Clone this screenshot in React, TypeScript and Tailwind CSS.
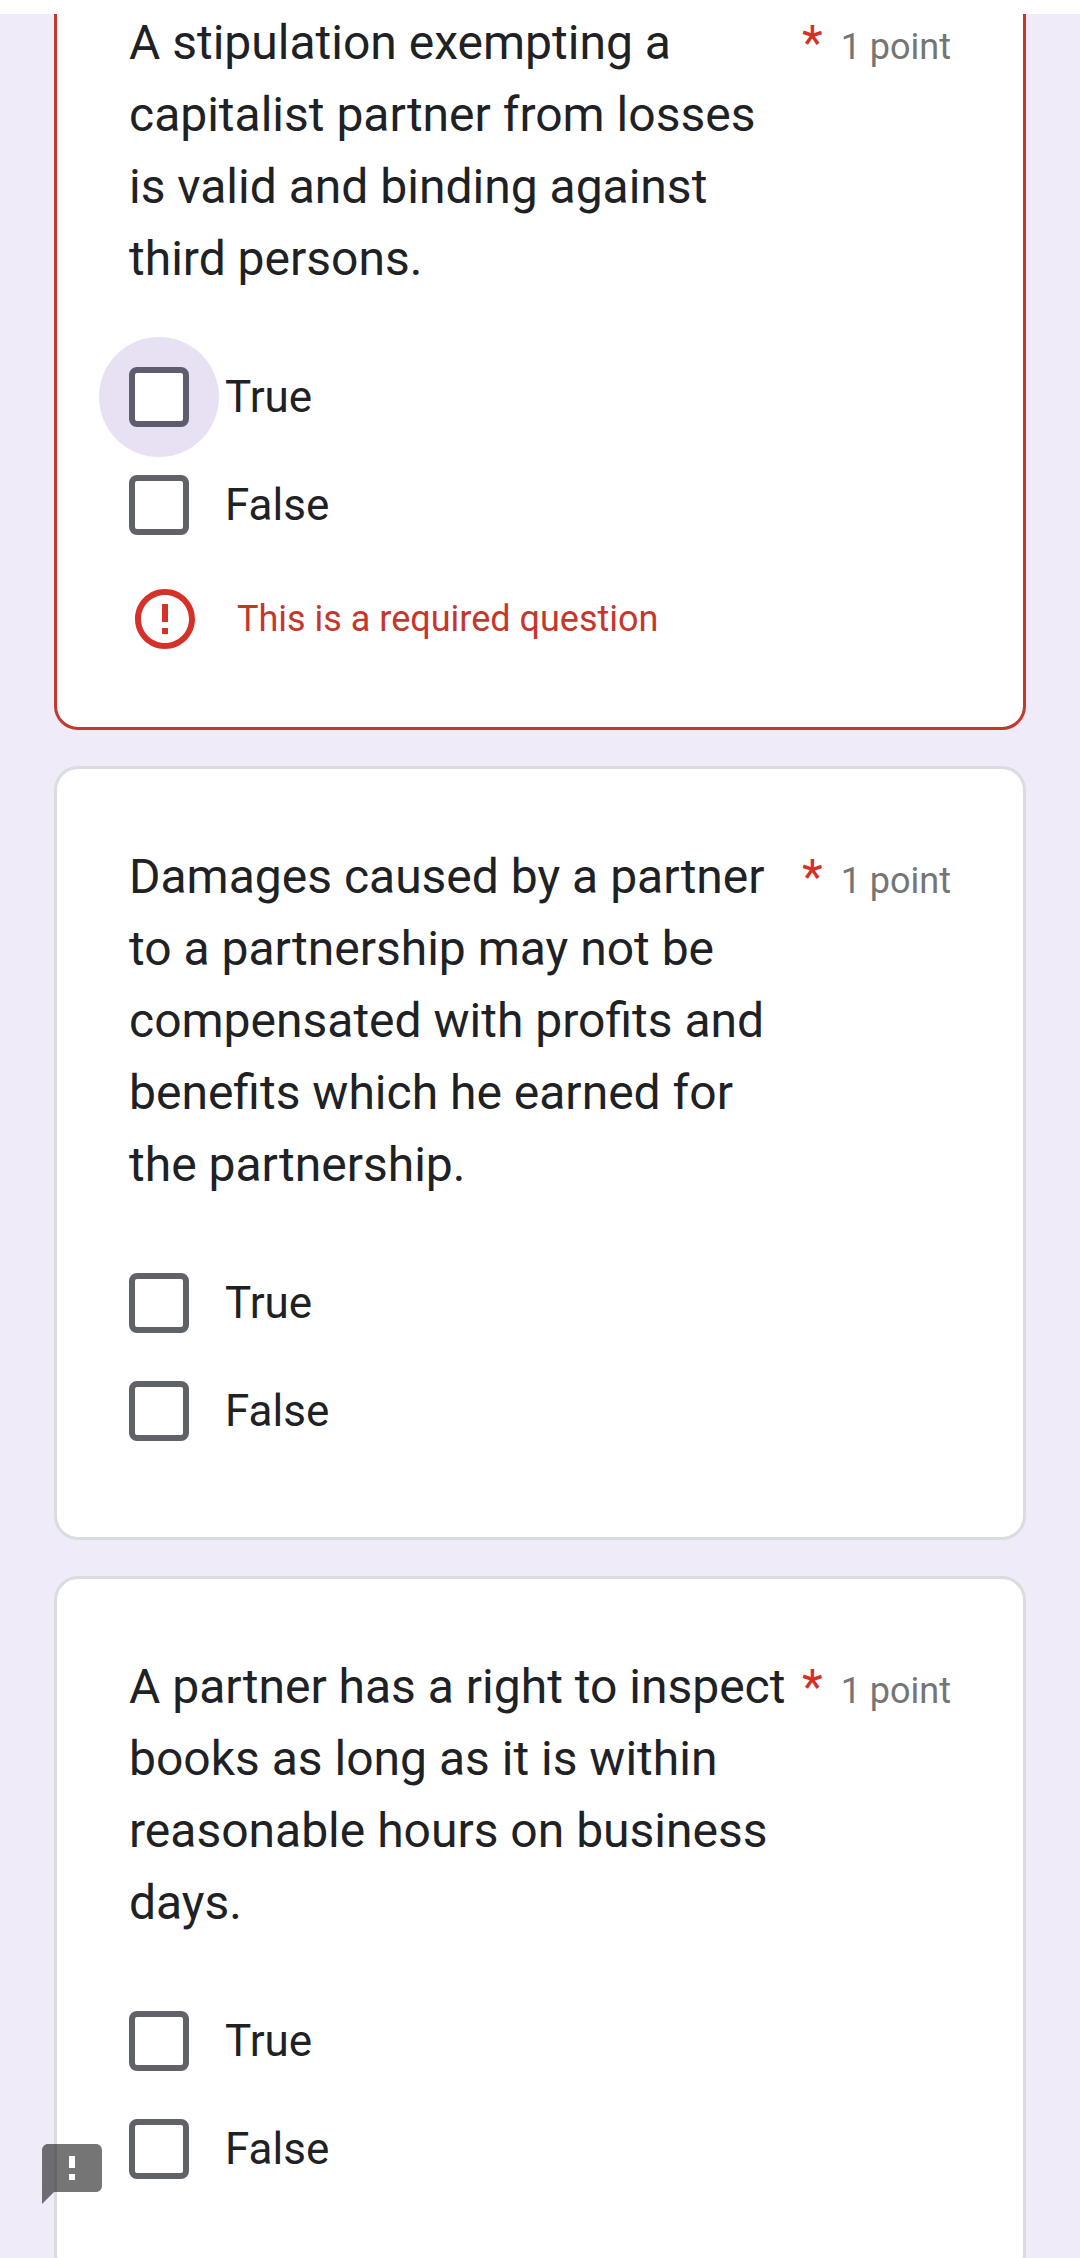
import React, { useState } from 'react';
import { clsx } from 'clsx';

interface Question {
  id: string;
  text: string;
  error?: string;
  pressed?: string;
}

const options = ['True', 'False'];

const questions: Question[] = [
  {
    id: 'losses',
    text: 'A stipulation exempting a capitalist partner from losses is valid and binding against third persons.',
    error: 'This is a required question',
    pressed: 'True',
  },
  {
    id: 'damages',
    text: 'Damages caused by a partner to a partnership may not be compensated with profits and benefits which he earned for the partnership.',
  },
  {
    id: 'inspect',
    text: 'A partner has a right to inspect books as long as it is within reasonable hours on business days.',
  },
];

function ErrorIcon() {
  return (
    <svg viewBox="0 0 24 24" className="size-18 shrink-0 fill-[#d53128]" aria-hidden="true">
      <path d="M11 15h2v2h-2zm0-8h2v6h-2zm.99-5C6.47 2 2 6.48 2 12s4.47 10 9.99 10C17.52 22 22 17.52 22 12S17.52 2 11.99 2zM12 20c-4.42 0-8-3.58-8-8s3.58-8 8-8 8 3.58 8 8-3.58 8-8 8z" />
    </svg>
  );
}

function FeedbackIcon() {
  return (
    <svg viewBox="0 0 24 24" className="size-18 fill-black/54" aria-hidden="true">
      <path d="M20 2H4c-1.1 0-1.99.9-1.99 2L2 22l4-4h14c1.1 0 2-.9 2-2V4c0-1.1-.9-2-2-2zm-7 12h-2v-2h2v2zm0-4h-2V6h2v4z" />
    </svg>
  );
}

function Option({ name, label, pressed }: { name: string; label: string; pressed: boolean }) {
  const [checked, setChecked] = useState(false);

  return (
    <label className="flex h-27 items-center gap-9 text-[44px] text-[#202124]">
      <span className="relative flex size-15 shrink-0">
        {pressed && <span className="absolute -inset-[30px] rounded-full bg-[#e8e1f4]" />}
        <input
          type="checkbox"
          name={name}
          value={label}
          checked={checked}
          onChange={e => setChecked(e.target.checked)}
          className={clsx(
            'relative size-15 appearance-none rounded-lg border-6 bg-white checked:bg-[#673ab7]',
            pressed ? 'border-[#605c70]' : 'border-[#5f6368]'
          )}
        />
      </span>
      {label}
    </label>
  );
}

function QuestionCard({ question }: { question: Question }) {
  const { id, text, error, pressed } = question;

  return (
    <section
      role="group"
      aria-labelledby={id}
      className={clsx(
        'rounded-3xl border-3 bg-white p-18',
        error ? 'border-[#c5372c]' : 'border-[#dadce0]'
      )}
    >
      <div className="mb-12 flex items-start gap-3">
        <h2 id={id} className="flex-1 text-5xl leading-[72px] text-[#202124]">
          {text}
        </h2>
        <div className="flex items-baseline gap-4.5">
          <span className="text-5xl leading-[72px] text-[#d53128]">*</span>
          <span className="text-4xl leading-[72px] text-[#757575]">1 point</span>
        </div>
      </div>
      {options.map(option => (
        <Option key={option} name={id} label={option} pressed={pressed === option} />
      ))}
      {error && (
        <div role="alert" className="mt-6 flex items-center gap-9 text-4xl text-[#c5372c]">
          <ErrorIcon />
          {error}
        </div>
      )}
    </section>
  );
}

function App() {
  return (
    <div className="flex h-screen flex-col bg-[#f0ebf8] font-[Roboto,sans-serif]">
      <header className="h-3.5 shrink-0 bg-white" />
      <main className="flex-1 overflow-hidden">
        {/* the form is scrolled part way past the first question */}
        <form className="-mt-[82px] flex flex-col gap-9 px-[54px]">
          {questions.map(question => (
            <QuestionCard key={question.id} question={question} />
          ))}
        </form>
      </main>
      <button type="button" aria-label="Report a problem" className="fixed bottom-12 left-9">
        <FeedbackIcon />
      </button>
    </div>
  );
}

export default App;
